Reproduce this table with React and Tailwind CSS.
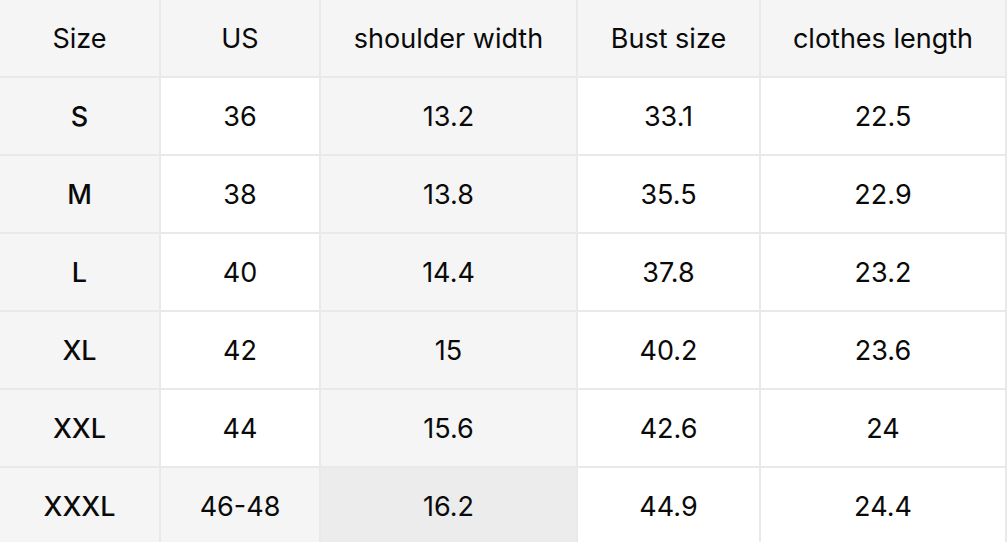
import React from 'react';

const headers = ['Size', 'US', 'shoulder width', 'Bust size', 'clothes length'];

const rows = [
  ['S', '36', '13.2', '33.1', '22.5'],
  ['M', '38', '13.8', '35.5', '22.9'],
  ['L', '40', '14.4', '37.8', '23.2'],
  ['XL', '42', '15', '40.2', '23.6'],
  ['XXL', '44', '15.6', '42.6', '24'],
  ['XXXL', '46-48', '16.2', '44.9', '24.4'],
];

// background per column, last row has its own shading
const cellBg = (row, col, last) => {
  if (col === 0) return 'bg-[#f5f5f5]';
  if (col === 2) return last ? 'bg-[#ececec]' : 'bg-[#f5f5f5]';
  if (col === 1 && last) return 'bg-[#f5f5f5]';
  return 'bg-white';
};

const App = () => {
  return (
    <div className="w-[1008px] h-[542px] overflow-hidden bg-white" style={{ fontFamily: 'Inter, "Noto Sans", sans-serif' }}>
      <div className="w-[1007px] bg-[#e9e9e9] pr-[2px]">
        <div className="grid grid-cols-[159px_158px_255px_181px_244px] gap-[2px] text-[27px] text-[#0a0a0a]">
          {headers.map((h) => (
            <div key={h} className="h-[76px] pt-[2px] bg-[#f5f5f5] flex items-center justify-center">
              {h}
            </div>
          ))}
          {rows.map((r, i) =>
            r.map((v, j) => (
              <div
                key={`${i}-${j}`}
                className={`h-[76px] pt-[2px] flex items-center justify-center ${cellBg(i, j, i === rows.length - 1)} ${j === 0 ? 'font-medium' : ''}`}
              >
                {v}
              </div>
            ))
          )}
        </div>
      </div>
    </div>
  );
};

export default App;
